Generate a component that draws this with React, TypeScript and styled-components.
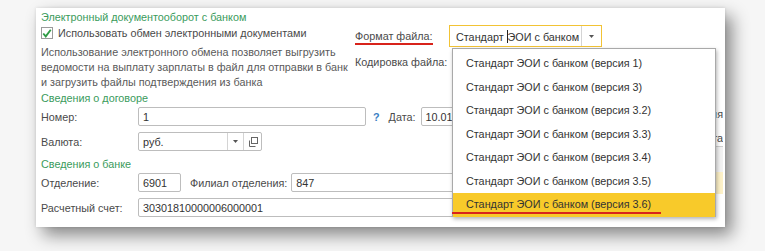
import React from "react";
import styled, { createGlobalStyle, css } from "styled-components";

const GlobalStyle = createGlobalStyle`
  body {
    margin: 0;
    background: #f6f6f6;
    font-family: "Liberation Sans", Arial, sans-serif;
    font-size: 10.8px;
  }
`;

const Page = styled.div`
  width: 765px;
  height: 251px;
  box-sizing: border-box;
  padding: 8px 0 0 36px;
  overflow: hidden;
`;

const Panel = styled.div`
  position: relative;
  width: 689px;
  height: 219px;
  box-sizing: border-box;
  padding: 2px 0 0 5px;
  background: #fff;
  overflow: hidden;
  box-shadow: 7px 8px 16px rgba(0, 0, 0, 0.45), 0 0 3px rgba(0, 0, 0, 0.12);
`;

const TopSection = styled.div`
  display: flex;
`;

const LeftCol = styled.div`
  width: 314px;
  flex: none;
`;

const RightCol = styled.div`
  padding-top: 15px;
`;

const GroupTitle = styled.div<{ $gap?: number }>`
  color: #3a9b5c;
  line-height: 14px;
  margin-top: ${(p) => p.$gap ?? 0}px;
  white-space: nowrap;
`;

const CheckRow = styled.label`
  display: flex;
  align-items: center;
  gap: 5px;
  height: 16px;
  margin-top: 1px;
  color: #4a4a4a;
  white-space: nowrap;
`;

const CheckBox = styled.span`
  width: 12px;
  height: 12px;
  box-sizing: border-box;
  border: 1px solid #9a9a9a;
  background: #fff;
  display: flex;
  align-items: center;
  justify-content: center;
`;

const Description = styled.div`
  margin-top: 4px;
  color: #5a5a5a;
  line-height: 15px;
  white-space: nowrap;
`;

const FormatRow = styled.div`
  display: flex;
  align-items: center;
  height: 22px;
`;

const SideLabel = styled.span<{ $marked?: boolean }>`
  width: 94px;
  flex: none;
  color: #4a4a4a;
  white-space: nowrap;
  ${(p) =>
    p.$marked &&
    css`
      span {
        border-bottom: 2px solid #d8231b;
        padding-bottom: 1px;
      }
    `}
`;

const Combo = styled.div`
  width: 153px;
  height: 22px;
  box-sizing: border-box;
  border: 1px solid #f2c335;
  display: flex;
  align-items: center;
  color: #333;
`;

const ComboText = styled.span`
  flex: 1;
  padding-left: 6px;
  white-space: nowrap;
  overflow: hidden;
`;

const Caret = styled.span`
  display: inline-block;
  width: 1px;
  height: 13px;
  background: #222;
  vertical-align: -2px;
`;

const Cell = styled.span<{ $w: number }>`
  width: ${(p) => p.$w}px;
  height: 100%;
  flex: none;
  display: flex;
  align-items: center;
  justify-content: center;
  border-left: 1px solid #d4d4d4;
  box-sizing: border-box;
`;

const EncodingRow = styled.div`
  height: 16px;
  margin-top: 7px;
  line-height: 16px;
  color: #4a4a4a;
  white-space: nowrap;
`;

const Lower = styled.div`
  display: flex;
`;

const FormCol = styled.div`
  width: 574px;
  flex: none;
`;

const Row = styled.div<{ $gap: number }>`
  display: flex;
  align-items: center;
  height: 19px;
  margin-top: ${(p) => p.$gap}px;
`;

const Label = styled.span<{ $w?: number; $ml?: number }>`
  width: ${(p) => (p.$w ? `${p.$w}px` : "auto")};
  margin-left: ${(p) => p.$ml ?? 0}px;
  flex: none;
  color: #4a4a4a;
  white-space: nowrap;
`;

const Input = styled.div<{ $w: number; $ml?: number }>`
  width: ${(p) => p.$w}px;
  height: 19px;
  margin-left: ${(p) => p.$ml ?? 0}px;
  flex: none;
  box-sizing: border-box;
  border: 1px solid #bdbdbd;
  border-radius: 2px;
  display: flex;
  align-items: center;
  color: #333;
  white-space: nowrap;
  overflow: hidden;
`;

const InputText = styled.span`
  flex: 1;
  padding-left: 4px;
`;

const Help = styled.span`
  margin-left: 7px;
  color: #3b7fc4;
  font-weight: bold;
  flex: none;
`;

const SideCol = styled.div`
  flex: 1;
  min-width: 0;
  padding: 17px 2px 0 0;
`;

const SideText = styled.div<{ $gap: number }>`
  margin-top: ${(p) => p.$gap}px;
  line-height: 14px;
  text-align: right;
  color: #4a4a4a;
  white-space: nowrap;
  overflow: hidden;
`;

const Table = styled.div`
  margin-top: 1px;
  border-top: 1px solid #cfcfcf;
`;

const TableRow = styled.div<{ $h: number; $bg: string }>`
  height: ${(p) => p.$h}px;
  background: ${(p) => p.$bg};
`;

const DropList = styled.ul`
  position: absolute;
  left: 416px;
  top: 40px;
  width: 264px;
  height: 169px;
  box-sizing: border-box;
  margin: 0;
  padding: 3px 0 0;
  list-style: none;
  background: #fff;
  border: 1px solid #a9a9a9;
  box-shadow: 1px 2px 4px rgba(0, 0, 0, 0.3);
`;

const DropItem = styled.li<{ $active?: boolean }>`
  position: relative;
  height: 23.5px;
  line-height: 23.5px;
  padding-left: 13px;
  color: #333;
  white-space: nowrap;
  background: ${(p) => (p.$active ? "#f8ca2a" : "transparent")};
  ${(p) =>
    p.$active &&
    css`
      &::after {
        content: "";
        position: absolute;
        left: -1px;
        bottom: 3px;
        width: 209px;
        height: 2px;
        background: #d8231b;
      }
    `}
`;

const Arrow = () => (
  <svg width="5" height="3" viewBox="0 0 5 3">
    <path d="M0 0h5L2.5 3z" fill="#555" />
  </svg>
);

const OpenIcon = () => (
  <svg width="10" height="10" viewBox="0 0 10 10">
    <rect x="3.5" y="0.5" width="6" height="6" fill="#fff" stroke="#666" />
    <path d="M1.5 3.5v6h6" fill="none" stroke="#666" />
  </svg>
);

const Check = () => (
  <svg width="12" height="11" viewBox="0 0 12 11">
    <path d="M1.5 5.5l3 3.5L10.5 1" fill="none" stroke="#2e9b45" strokeWidth="2.2" />
  </svg>
);

const versions = ["1", "3", "3.2", "3.3", "3.4", "3.5", "3.6"];

const App: React.FC = () => {
  return (
    <Page>
      <GlobalStyle />
      <Panel>
        <TopSection>
          <LeftCol>
            <GroupTitle>Электронный документооборот с банком</GroupTitle>
            <CheckRow>
              <CheckBox>
                <Check />
              </CheckBox>
              Использовать обмен электронными документами
            </CheckRow>
            <Description>
              Использование электронного обмена позволяет выгрузить
              <br />
              ведомости на выплату зарплаты в файл для отправки в банк
              <br />
              и загрузить файлы подтверждения из банка
            </Description>
          </LeftCol>
          <RightCol>
            <FormatRow>
              <SideLabel $marked>
                <span>Формат файла:</span>
              </SideLabel>
              <Combo>
                <ComboText>
                  Стандарт <Caret />ЭОИ с банком
                </ComboText>
                <Cell $w={20}>
                  <Arrow />
                </Cell>
              </Combo>
            </FormatRow>
            <EncodingRow>Кодировка файла:</EncodingRow>
          </RightCol>
        </TopSection>

        <Lower>
          <FormCol>
            <GroupTitle $gap={1}>Сведения о договоре</GroupTitle>
            <Row $gap={2}>
              <Label $w={97}>Номер:</Label>
              <Input $w={228}>
                <InputText>1</InputText>
              </Input>
              <Help>?</Help>
              <Label $ml={9}>Дата:</Label>
              <Input $w={90} $ml={5}>
                <InputText>10.01.2019</InputText>
              </Input>
            </Row>
            <Row $gap={6}>
              <Label $w={97}>Валюта:</Label>
              <Input $w={124}>
                <InputText>руб.</InputText>
                <Cell $w={16}>
                  <Arrow />
                </Cell>
                <Cell $w={18}>
                  <OpenIcon />
                </Cell>
              </Input>
            </Row>
            <GroupTitle $gap={6}>Сведения о банке</GroupTitle>
            <Row $gap={2}>
              <Label $w={97}>Отделение:</Label>
              <Input $w={43}>
                <InputText>6901</InputText>
              </Input>
              <Label $ml={9}>Филиал отделения:</Label>
              <Input $w={240} $ml={4}>
                <InputText>847</InputText>
              </Input>
            </Row>
            <Row $gap={6}>
              <Label $w={97}>Расчетный счет:</Label>
              <Input $w={420}>
                <InputText>30301810000006000001</InputText>
              </Input>
            </Row>
          </FormCol>
          <SideCol>
            <SideText $gap={0}>ия</SideText>
            <SideText $gap={10}>та</SideText>
            <Table>
              <TableRow $h={25} $bg="#f2f2f2" />
              <TableRow $h={22} $bg="#fdf1c8" />
            </Table>
          </SideCol>
        </Lower>

        <DropList>
          {versions.map((v) => (
            <DropItem key={v} $active={v === "3.6"}>
              Стандарт ЭОИ с банком (версия {v})
            </DropItem>
          ))}
        </DropList>
      </Panel>
    </Page>
  );
};

export default App;
